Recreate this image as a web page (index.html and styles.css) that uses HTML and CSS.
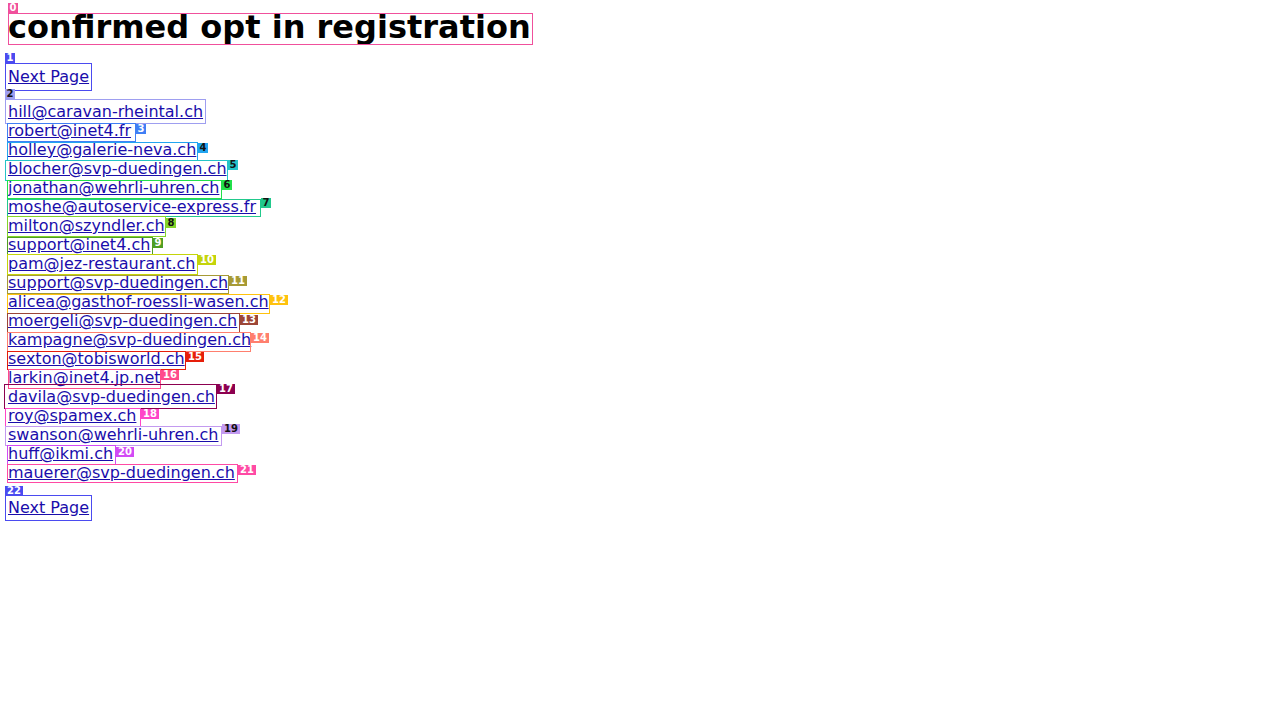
FILE: index.html
```html
<!DOCTYPE html>
<html lang="en">
<head>
<meta charset="utf-8">
<title>confirmed opt in registration</title>
<link rel="stylesheet" href="styles.css">
</head>
<body>
<h1 class="title">confirmed opt in registration</h1>
<div class="nav nav-top"><a href="#">Next Page</a></div>
<div class="list">
  <a href="#">hill@caravan-rheintal.ch</a><br>
  <a href="#">robert@inet4.fr</a><br>
  <a href="#">holley@galerie-neva.ch</a><br>
  <a href="#">blocher@svp-duedingen.ch</a><br>
  <a href="#">jonathan@wehrli-uhren.ch</a><br>
  <a href="#">moshe@autoservice-express.fr</a><br>
  <a href="#">milton@szyndler.ch</a><br>
  <a href="#">support@inet4.ch</a><br>
  <a href="#">pam@jez-restaurant.ch</a><br>
  <a href="#">support@svp-duedingen.ch</a><br>
  <a href="#">alicea@gasthof-roessli-wasen.ch</a><br>
  <a href="#">moergeli@svp-duedingen.ch</a><br>
  <a href="#">kampagne@svp-duedingen.ch</a><br>
  <a href="#">sexton@tobisworld.ch</a><br>
  <a href="#">larkin@inet4.jp.net</a><br>
  <a href="#">davila@svp-duedingen.ch</a><br>
  <a href="#">roy@spamex.ch</a><br>
  <a href="#">swanson@wehrli-uhren.ch</a><br>
  <a href="#">huff@ikmi.ch</a><br>
  <a href="#">mauerer@svp-duedingen.ch</a>
</div>
<div class="nav nav-bottom"><a href="#">Next Page</a></div>

<div class="marks">
  <div class="box c0 b0"></div><span class="tag c0 t0">0</span>
  <div class="box c1 b1"></div><span class="tag c1 t1">1</span>
  <div class="box c2 b2"></div><span class="tag c2 t2 dark">2</span>
  <div class="box c3 b3"></div><span class="tag c3 t3">3</span>
  <div class="box c4 b4"></div><span class="tag c4 t4 dark">4</span>
  <div class="box c5 b5"></div><span class="tag c5 t5 dark">5</span>
  <div class="box c6 b6"></div><span class="tag c6 t6 dark">6</span>
  <div class="box c7 b7"></div><span class="tag c7 t7 dark">7</span>
  <div class="box c8 b8"></div><span class="tag c8 t8 dark">8</span>
  <div class="box c9 b9"></div><span class="tag c9 t9">9</span>
  <div class="box c10 b10"></div><span class="tag c10 t10">10</span>
  <div class="box c11 b11"></div><span class="tag c11 t11">11</span>
  <div class="box c12 b12"></div><span class="tag c12 t12">12</span>
  <div class="box c13 b13"></div><span class="tag c13 t13">13</span>
  <div class="box c14 b14"></div><span class="tag c14 t14">14</span>
  <div class="box c15 b15"></div><span class="tag c15 t15">15</span>
  <div class="box c16 b16"></div><span class="tag c16 t16">16</span>
  <div class="box c17 b17"></div><span class="tag c17 t17">17</span>
  <div class="box c18 b18"></div><span class="tag c18 t18">18</span>
  <div class="box c19 b19"></div><span class="tag c19 t19 dark">19</span>
  <div class="box c20 b20"></div><span class="tag c20 t20">20</span>
  <div class="box c21 b21"></div><span class="tag c21 t21">21</span>
  <div class="box c22 b22"></div><span class="tag c22 t22">22</span>
</div>
</body>
</html>
```

FILE: styles.css
```css
html, body {
  background: #ffffff;
}
body {
  margin: 8px;
  font-family: "DejaVu Sans", "Liberation Sans", sans-serif;
  font-size: 16px;
  color: #000;
}
a {
  color: #1a0dab;
  text-decoration: underline;
}
.title {
  margin: 0;
  font-size: 32px;
  line-height: 38px;
  font-weight: bold;
}
.nav {
  line-height: 19px;
}
.nav-top {
  margin-top: 21px;
}
.list {
  margin-top: 16px;
  line-height: 19px;
}
.nav-bottom {
  margin-top: 16px;
}

/* annotation overlay */
.marks {
  position: absolute;
  left: 0;
  top: 0;
  width: 1280px;
  height: 720px;
  pointer-events: none;
}
.box {
  position: absolute;
  box-sizing: border-box;
  border: 1px solid;
}
.tag {
  position: absolute;
  display: block;
  box-sizing: border-box;
  height: 10px;
  min-width: 10px;
  padding: 0 1px;
  font-family: "DejaVu Sans", sans-serif;
  font-weight: bold;
  font-size: 10px;
  line-height: 10px;
  color: #fff;
  text-align: center;
  white-space: nowrap;
}
.tag.dark { color: #111; }

/* colours */
.box.c0 { border-color: #f0509c; }  .tag.c0 { background: #f0509c; }
.box.c1 { border-color: #4b4bf0; }  .tag.c1 { background: #4b4bf0; }
.box.c2 { border-color: #9e9ef0; }  .tag.c2 { background: #9e9ef0; }
.box.c3 { border-color: #3f7ff5; }  .tag.c3 { background: #3f7ff5; }
.box.c4 { border-color: #22a5f0; }  .tag.c4 { background: #22a5f0; }
.box.c5 { border-color: #25c4c8; }  .tag.c5 { background: #25c4c8; }
.box.c6 { border-color: #22e04a; }  .tag.c6 { background: #22e04a; }
.box.c7 { border-color: #22c98c; }  .tag.c7 { background: #22c98c; }
.box.c8 { border-color: #84d42a; }  .tag.c8 { background: #84d42a; }
.box.c9 { border-color: #4f9e22; }  .tag.c9 { background: #4f9e22; }
.box.c10 { border-color: #c4d40a; } .tag.c10 { background: #c4d40a; }
.box.c11 { border-color: #a69a35; } .tag.c11 { background: #a69a35; }
.box.c12 { border-color: #ffc20d; } .tag.c12 { background: #ffc20d; }
.box.c13 { border-color: #9c4637; } .tag.c13 { background: #9c4637; }
.box.c14 { border-color: #ff7f6e; } .tag.c14 { background: #ff7f6e; }
.box.c15 { border-color: #e61e0a; } .tag.c15 { background: #e61e0a; }
.box.c16 { border-color: #ff4a8c; } .tag.c16 { background: #ff4a8c; }
.box.c17 { border-color: #8c0050; } .tag.c17 { background: #8c0050; }
.box.c18 { border-color: #ff45c8; } .tag.c18 { background: #ff45c8; }
.box.c19 { border-color: #c39af0; } .tag.c19 { background: #c39af0; }
.box.c20 { border-color: #d24af5; } .tag.c20 { background: #d24af5; }
.box.c21 { border-color: #ff4aa5; } .tag.c21 { background: #ff4aa5; }
.box.c22 { border-color: #4b4bf0; } .tag.c22 { background: #4b4bf0; }

/* box geometry */
.b0  { left: 8px; top: 13px; width: 525px; height: 32px; }
.b1  { left: 5px; top: 63px; width: 87px;  height: 28px; }
.b2  { left: 5px; top: 99px; width: 201px; height: 25px; }
.b3  { left: 7px; top: 123px; width: 129px; height: 19px; }
.b4  { left: 7px; top: 142px; width: 191px; height: 19px; }
.b5  { left: 5px; top: 160px; width: 223px; height: 21px; }
.b6  { left: 7px; top: 180px; width: 215px; height: 19px; }
.b7  { left: 7px; top: 199px; width: 254px; height: 18px; }
.b8  { left: 7px; top: 216px; width: 159px; height: 21px; }
.b9  { left: 7px; top: 237px; width: 146px; height: 18px; }
.b10 { left: 7px; top: 254px; width: 191px; height: 21px; }
.b11 { left: 7px; top: 275px; width: 222px; height: 19px; }
.b12 { left: 7px; top: 294px; width: 263px; height: 20px; }
.b13 { left: 7px; top: 313px; width: 233px; height: 20px; }
.b14 { left: 7px; top: 332px; width: 244px; height: 20px; }
.b15 { left: 7px; top: 351px; width: 179px; height: 19px; }
.b16 { left: 8px; top: 369px; width: 153px; height: 20px; }
.b17 { left: 4px; top: 384px; width: 213px; height: 25px; }
.b18 { left: 5px; top: 408px; width: 136px; height: 19px; }
.b19 { left: 5px; top: 426px; width: 217px; height: 20px; }
.b20 { left: 7px; top: 445px; width: 109px; height: 20px; }
.b21 { left: 7px; top: 464px; width: 231px; height: 19px; }
.b22 { left: 5px; top: 495px; width: 87px;  height: 26px; }

/* tag positions */
.t0  { left: 8px;   top: 3px; }
.t1  { left: 5px;   top: 53px; }
.t2  { left: 5px;   top: 89px; }
.t3  { left: 136px; top: 124px; }
.t4  { left: 198px; top: 143px; }
.t5  { left: 228px; top: 160px; }
.t6  { left: 222px; top: 180px; }
.t7  { left: 261px; top: 198px; }
.t8  { left: 166px; top: 218px; }
.t9  { left: 153px; top: 238px; }
.t10 { left: 198px; top: 255px; padding: 0 2px; }
.t11 { left: 229px; top: 276px; padding: 0 2px; }
.t12 { left: 270px; top: 295px; padding: 0 2px; }
.t13 { left: 240px; top: 315px; padding: 0 2px; }
.t14 { left: 251px; top: 333px; padding: 0 2px; }
.t15 { left: 186px; top: 352px; padding: 0 2px; }
.t16 { left: 161px; top: 370px; padding: 0 2px; }
.t17 { left: 217px; top: 384px; padding: 0 2px; }
.t18 { left: 141px; top: 409px; padding: 0 2px; }
.t19 { left: 222px; top: 424px; padding: 0 2px; }
.t20 { left: 116px; top: 447px; padding: 0 2px; }
.t21 { left: 238px; top: 465px; padding: 0 2px; }
.t22 { left: 5px;   top: 486px; padding: 0 2px; }
```
